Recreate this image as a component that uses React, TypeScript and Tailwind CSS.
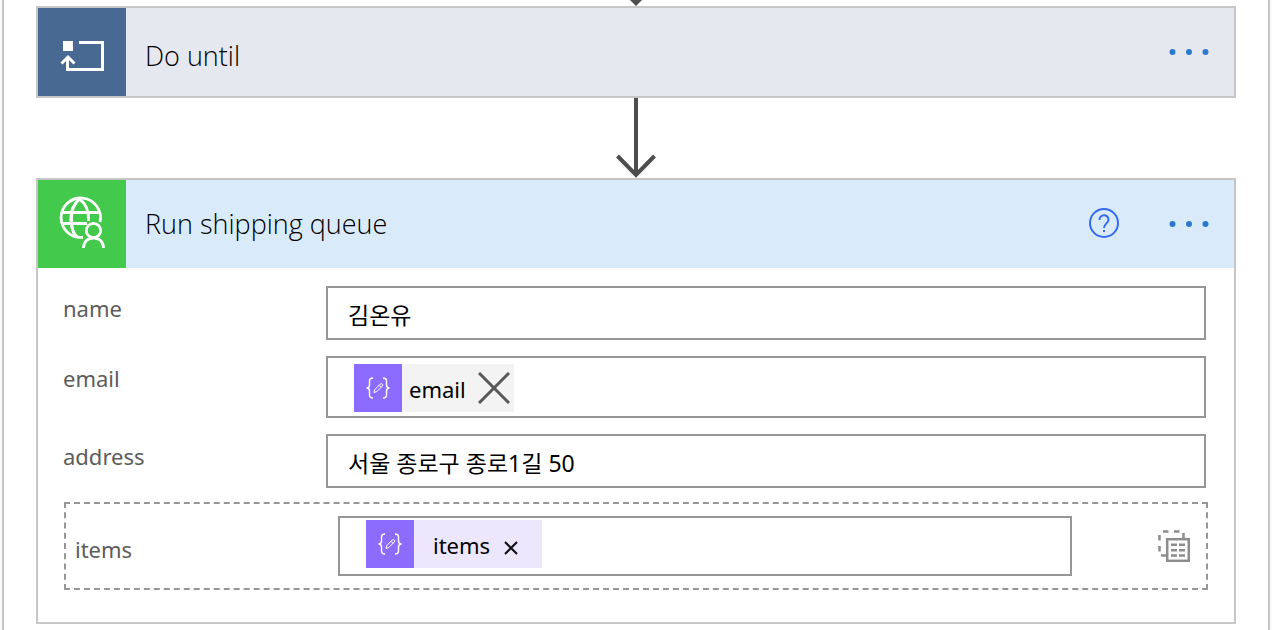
import React from "react";

function LoopIcon() {
  return (
    <svg className="h-11 w-12" viewBox="0 0 48 44" fill="none" aria-hidden="true">
      <rect x="5" y="7" width="10" height="10" fill="#fff" />
      <path d="M21 8.5H44.5V35.5H9.5V23" stroke="#fff" strokeWidth="3" />
      <path d="M3.5 29.5L10 23L16.5 29.5" stroke="#fff" strokeWidth="3" />
    </svg>
  );
}

function GlobePersonIcon() {
  return (
    <svg className="h-[88px] w-[88px]" viewBox="0 0 88 88" fill="none" stroke="#fff" strokeWidth="2.800" aria-hidden="true">
      <path d="M45 57.300A19.700 19.700 0 1 1 62 42" />
      <path d="M38.500 57.500C32 50 30.500 28 41.500 19C48.500 24 51 32 50.500 41" />
      <path d="M41.500 19C35.500 24 32.500 32 32.800 40C33.100 48 35.500 53 39 57" />
      <path d="M24 32.500H60.500M24 43.500H49" />
      <circle cx="55.500" cy="50.500" r="7.200" />
      <path d="M45.500 68C45.500 61.500 50 58 55.500 58S65.500 61.500 65.500 68" />
    </svg>
  );
}

function ArrowDown() {
  return (
    <svg className="mx-auto block h-20 w-10" viewBox="0 0 40 80" fill="none" stroke="#4d4d4d" strokeWidth="4" aria-hidden="true">
      <path d="M20 0V77M1.500 58L20 77L38.500 58" />
    </svg>
  );
}

function MoreButton({ label }: { label: string }) {
  return (
    <button type="button" aria-label={label} className="flex h-10 items-center">
      <svg className="h-2 w-10" viewBox="0 0 40 8" fill="#2b79cf" aria-hidden="true">
        <circle cx="3.500" cy="4" r="3" />
        <circle cx="20" cy="4" r="3" />
        <circle cx="36.500" cy="4" r="3" />
      </svg>
    </button>
  );
}

function ExpressionIcon() {
  return (
    <span className="flex size-12 shrink-0 items-center justify-center bg-[#8c6cff]">
      <svg className="h-6 w-7" viewBox="0 0 28 24" fill="none" stroke="#fff" strokeWidth="1.400" aria-hidden="true">
        <path d="M9 2C6 2 5.500 3 5.500 5V9C5.500 11 4.500 12 2.500 12C4.500 12 5.500 13 5.500 15V19C5.500 21 6 22 9 22" />
        <path d="M19 2C22 2 22.500 3 22.500 5V9C22.500 11 23.500 12 25.500 12C23.500 12 22.500 13 22.500 15V19C22.500 21 22 22 19 22" />
        <path d="M10 16.500L10.800 13.500L16.300 8C17.800 6.800 19.500 8.500 18.300 10L12.800 15.500ZM15 9.300L17 11.300" strokeWidth="1" />
      </svg>
    </span>
  );
}

function TableSwitchIcon() {
  return (
    <svg className="size-8" viewBox="0 0 32 32" fill="none" stroke="#8c8c8c" aria-hidden="true">
      <path d="M5 1.500H10.500M16 1.500H21.500M1.500 5V10.500M1.500 16V21.500M25.500 3V9M3 25.500H8" strokeWidth="2.500" />
      <rect x="9.200" y="9.200" width="21.600" height="21.600" strokeWidth="2.500" />
      <path d="M13 14.800H19M21 14.800H27M13 20.200H19M21 20.200H27M13 25.600H19M21 25.600H27" strokeWidth="2.500" />
    </svg>
  );
}

const labelClass = "w-[263px] shrink-0 pt-1.5 text-[22px] leading-8 text-[#5c5c5c]";

function TextRow({ id, value }: { id: string; value: string }) {
  return (
    <div className="mr-0.5 flex">
      <label htmlFor={id} className={labelClass}>
        {id}
      </label>
      <input
        id={id}
        defaultValue={value}
        className="h-[54px] min-w-0 flex-1 border-2 border-[#969696] bg-white px-5 pt-0.5 text-[23px] text-black outline-none"
      />
    </div>
  );
}

export default function App() {
  return (
    <div className="bg-[#fafafa] px-0.5 font-['Noto_Sans','Noto_Sans_CJK_KR',sans-serif]">
      <main className="min-h-screen border-x-2 border-[#c6c6c6] bg-white px-8">
        <svg className="mx-auto block h-1.5 w-10" viewBox="0 0 40 6" aria-hidden="true">
          <path d="M14 0H26L20 6Z" fill="#4d4d4d" />
        </svg>
        <section className="flex border-2 border-[#c6c6c6] bg-[#e5e8ef]">
          <div className="flex size-[88px] shrink-0 items-center justify-center bg-[#486991] pt-2">
            <LoopIcon />
          </div>
          <h2 className="flex flex-1 items-center pt-2 pl-[19px] font-['Open_Sans',sans-serif] text-[27px] font-light text-black">
            Do until
          </h2>
          <div className="flex items-center pr-[25px]">
            <MoreButton label="Do until menu" />
          </div>
        </section>
        <ArrowDown />
        <section className="border-2 border-[#c6c6c6] bg-white">
          <header className="flex bg-[#d9eafa]">
            <div className="size-[88px] shrink-0 bg-[#43c94c]">
              <GlobePersonIcon />
            </div>
            <h2 className="flex flex-1 items-center pl-[19px] font-['Open_Sans',sans-serif] text-[27px] font-light text-black">
              Run shipping queue
            </h2>
            <div className="flex items-center gap-[49px] pr-[25px]">
              <button type="button" aria-label="Help">
                <svg className="size-8" viewBox="0 0 32 32" fill="none" stroke="#346bf1" strokeWidth="2" aria-hidden="true">
                  <circle cx="16" cy="15" r="14" />
                  <path d="M11.500 12C11.500 5.800 20.500 6 20.500 11.500C20.500 15.300 16 15.500 16 20M16 22V24" />
                </svg>
              </button>
              <MoreButton label="Run shipping queue menu" />
            </div>
          </header>
          <div className="flex flex-col gap-4 pt-[18px] pr-[26px] pb-8 pl-[25px]">
            <TextRow id="name" value="김온유" />
            <div className="mr-0.5 flex">
              <label htmlFor="email" className={labelClass}>
                email
              </label>
              <div className="flex h-[62px] min-w-0 flex-1 border-2 border-[#969696] pt-1.5 pl-[26px]">
                <span className="flex h-12 items-center bg-[#f3f3f3] pr-1">
                  <ExpressionIcon />
                  <span className="pt-0.5 pr-3 pl-[7px] text-[22px] leading-8 text-black">email</span>
                  <button type="button" aria-label="Remove email">
                    <svg className="size-8" viewBox="0 0 32 32" stroke="#595959" strokeWidth="3" aria-hidden="true">
                      <path d="M1 1L31 31M31 1L1 31" />
                    </svg>
                  </button>
                </span>
                <input id="email" className="h-12 min-w-0 flex-1 text-[23px] outline-none" />
              </div>
            </div>
            <TextRow id="address" value="서울 종로구 종로1길 50" />
            <div className="-mt-0.5 ml-px flex items-center border-2 border-dashed border-[#969696] py-3 pr-4 pl-[9px]">
              <label htmlFor="items" className={labelClass}>
                items
              </label>
              <div className="flex h-[60px] min-w-0 flex-1 border-2 border-[#969696] pt-0.5 pl-[26px]">
                <span className="flex h-12 items-center bg-[#ede7fd] pr-[23px]">
                  <ExpressionIcon />
                  <span className="pt-0.5 pr-[13px] pl-[19px] text-[22px] leading-8 text-black">items</span>
                  <button type="button" aria-label="Remove items" className="pt-2">
                    <svg className="size-4" viewBox="0 0 16 16" stroke="#111" strokeWidth="2.200" aria-hidden="true">
                      <path d="M2 2L14 14M14 2L2 14" />
                    </svg>
                  </button>
                </span>
                <input id="items" className="h-12 min-w-0 flex-1 text-[23px] outline-none" />
              </div>
              <button type="button" aria-label="Switch to input entire array" className="ml-[86px] shrink-0">
                <TableSwitchIcon />
              </button>
            </div>
          </div>
        </section>
      </main>
    </div>
  );
}
